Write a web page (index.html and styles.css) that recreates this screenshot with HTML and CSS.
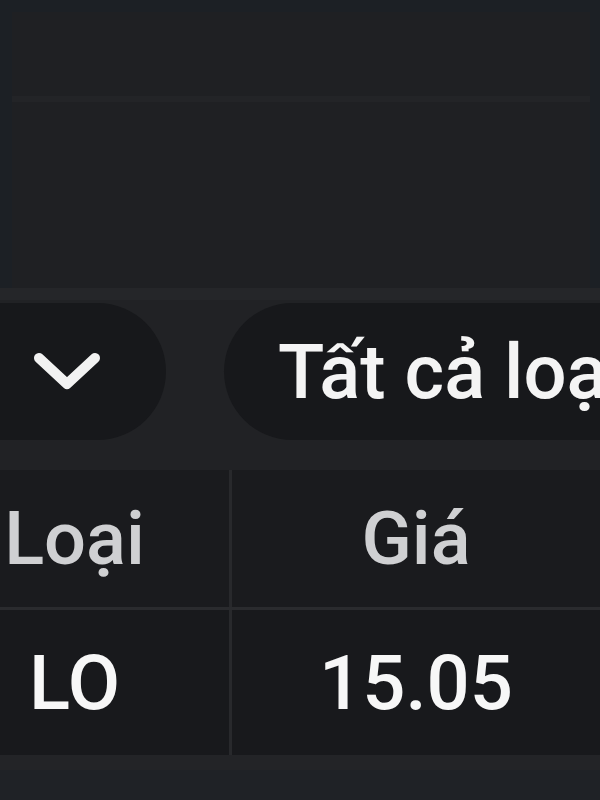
FILE: index.html
```html
<!DOCTYPE html>
<html>
<head>
  <meta charset="UTF-8">
  <title>Sổ lệnh</title>
  <link rel="stylesheet" href="styles.css">
</head>
<body>
  <div class="top">
    <div class="panel">
      <div class="panel-head"></div>
    </div>
  </div>
  <div class="band"></div>
  <div class="filters">
    <div class="pill pill-left">
      <svg class="chevron" width="68" height="40" viewBox="0 0 68 40">
        <polyline points="6,6 34,32 62,6" fill="none" stroke="#f2f2f2" stroke-width="10" stroke-linecap="round" stroke-linejoin="round"/>
      </svg>
    </div>
    <div class="pill pill-right">Tất cả loại lệnh</div>
  </div>
  <div class="table">
    <div class="tr thead">
      <div class="td col-type">Loại</div>
      <div class="td col-price">Giá</div>
    </div>
    <div class="tr tbody">
      <div class="td col-type">LO</div>
      <div class="td col-price">15.05</div>
    </div>
  </div>
  <div class="foot"></div>
</body>
</html>
```

FILE: styles.css
```css
* {
  margin: 0;
  padding: 0;
  box-sizing: border-box;
}
body {
  width: 600px;
  height: 800px;
  overflow: hidden;
  background: #1f2226;
  font-family: Roboto, "Noto Sans", sans-serif;
}
.top {
  height: 288px;
  padding: 12px 10px 0 12px;
  background: #1c2025;
}
.panel {
  height: 100%;
  background: #1f2023;
}
.panel-head {
  height: 90px;
  border-bottom: 6px solid #232427;
}
.band {
  height: 12px;
  background: #252629;
}
.filters {
  height: 170px;
  display: flex;
  align-items: flex-start;
  gap: 58px;
  padding-top: 3px;
  background: #212225;
  white-space: nowrap;
}
.pill {
  height: 137px;
  border-radius: 70px;
  background: #17181b;
  display: flex;
  align-items: center;
  flex: 0 0 auto;
}
.pill-left {
  width: 260px;
  margin-left: -94px;
  justify-content: flex-end;
  padding-right: 65px;
}
.pill-right {
  padding: 0 60px 0 54px;
  font-size: 76px;
  font-weight: 500;
  color: #f4f4f4;
}
.table {
  margin-left: -80px;
}
.tr {
  display: flex;
}
.td {
  display: flex;
  align-items: center;
  justify-content: center;
  white-space: nowrap;
}
.col-type {
  width: 312px;
  border-right: 3px solid #28292c;
}
.col-price {
  width: 368px;
}
.thead {
  height: 140px;
  background: #1a1b1e;
  border-bottom: 3px solid #2a2b2e;
  font-size: 74px;
  font-weight: 500;
  color: #cfd0d2;
}
.tbody {
  height: 145px;
  background: #18191c;
  font-size: 76px;
  font-weight: 500;
  color: #f7f7f7;
}
.foot {
  height: 15px;
  background: #232427;
}
```
